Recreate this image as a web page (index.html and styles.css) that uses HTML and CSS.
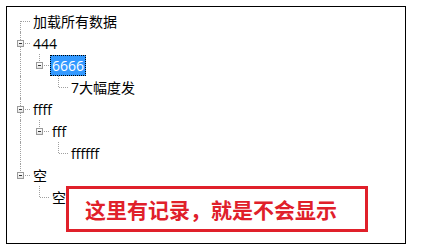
FILE: index.html
```html
<!DOCTYPE html>
<html lang="zh-CN">
<head>
<meta charset="utf-8">
<title>Tree</title>
<link rel="stylesheet" href="styles.css">
</head>
<body>
<div class="frame">
  <div class="tree">
    <div class="row"><span class="cell first"></span><span class="label">加载所有数据</span></div>
    <div class="row"><span class="cell tee"><i class="exp"></i></span><span class="label">444</span></div>
    <div class="row"><span class="cell pipe"></span><span class="cell elbow"><i class="exp"></i></span><span class="label selected">6666</span></div>
    <div class="row"><span class="cell pipe"></span><span class="cell"></span><span class="cell elbow"></span><span class="label">7大幅度发</span></div>
    <div class="row"><span class="cell tee"><i class="exp"></i></span><span class="label">ffff</span></div>
    <div class="row"><span class="cell pipe"></span><span class="cell elbow"><i class="exp"></i></span><span class="label">fff</span></div>
    <div class="row"><span class="cell pipe"></span><span class="cell"></span><span class="cell elbow"></span><span class="label">ffffff</span></div>
    <div class="row"><span class="cell elbow"><i class="exp"></i></span><span class="label">空</span></div>
    <div class="row"><span class="cell"></span><span class="cell elbow"></span><span class="label">空</span></div>
  </div>
  <div class="note">这里有记录，就是不会显示</div>
</div>
</body>
</html>
```

FILE: styles.css
```css
html, body {
  margin: 0;
  padding: 0;
  background: #fff;
}
body {
  font-family: "Open Sans", "Noto Sans CJK SC", sans-serif;
  font-size: 14px;
  color: #000;
}
.frame {
  position: relative;
  box-sizing: border-box;
  margin: 6px 0 0 6px;
  width: 400px;
  height: 238px;
  border: 1px solid #000;
}
.tree {
  padding: 3px 0 0 4px;
}
.row {
  display: flex;
  align-items: center;
  height: 22px;
}
.cell {
  position: relative;
  flex: 0 0 19px;
  height: 22px;
}
.cell::before,
.cell::after {
  content: "";
  position: absolute;
}
.pipe::before,
.tee::before {
  left: 9px;
  top: 0;
  bottom: 0;
  border-left: 1px dotted #a0a0a0;
}
.elbow::before {
  left: 9px;
  top: 0;
  height: 11px;
  border-left: 1px dotted #a0a0a0;
}
.first::before {
  left: 9px;
  top: 11px;
  bottom: 0;
  border-left: 1px dotted #a0a0a0;
}
.tee::after,
.elbow::after,
.first::after {
  left: 10px;
  right: 0;
  top: 11px;
  border-top: 1px dotted #a0a0a0;
}
.exp {
  position: absolute;
  z-index: 1;
  left: 6px;
  top: 8px;
  width: 7px;
  height: 7px;
  box-sizing: border-box;
  border: 1px solid #9a9a9a;
  background: linear-gradient(#ffffff, #e4e4e4);
}
.exp::after {
  content: "";
  position: absolute;
  left: 1px;
  top: 2px;
  width: 3px;
  height: 1px;
  background: #333;
}
.label {
  display: inline-block;
  margin-left: 1px;
  padding: 0 2px;
  height: 21px;
  line-height: 21px;
  white-space: nowrap;
}
.selected {
  background: #3399ff;
  color: #fff;
  outline: 1px dotted #000;
  outline-offset: -1px;
}
.note {
  position: absolute;
  left: 59px;
  top: 179px;
  width: 302px;
  height: 46px;
  box-sizing: border-box;
  border: 3px solid #e0202a;
  background: #fff;
  color: #e0202a;
  font-family: "Noto Sans CJK SC", sans-serif;
  font-weight: bold;
  font-size: 21px;
  line-height: 40px;
  padding-left: 16px;
  white-space: nowrap;
}
```
